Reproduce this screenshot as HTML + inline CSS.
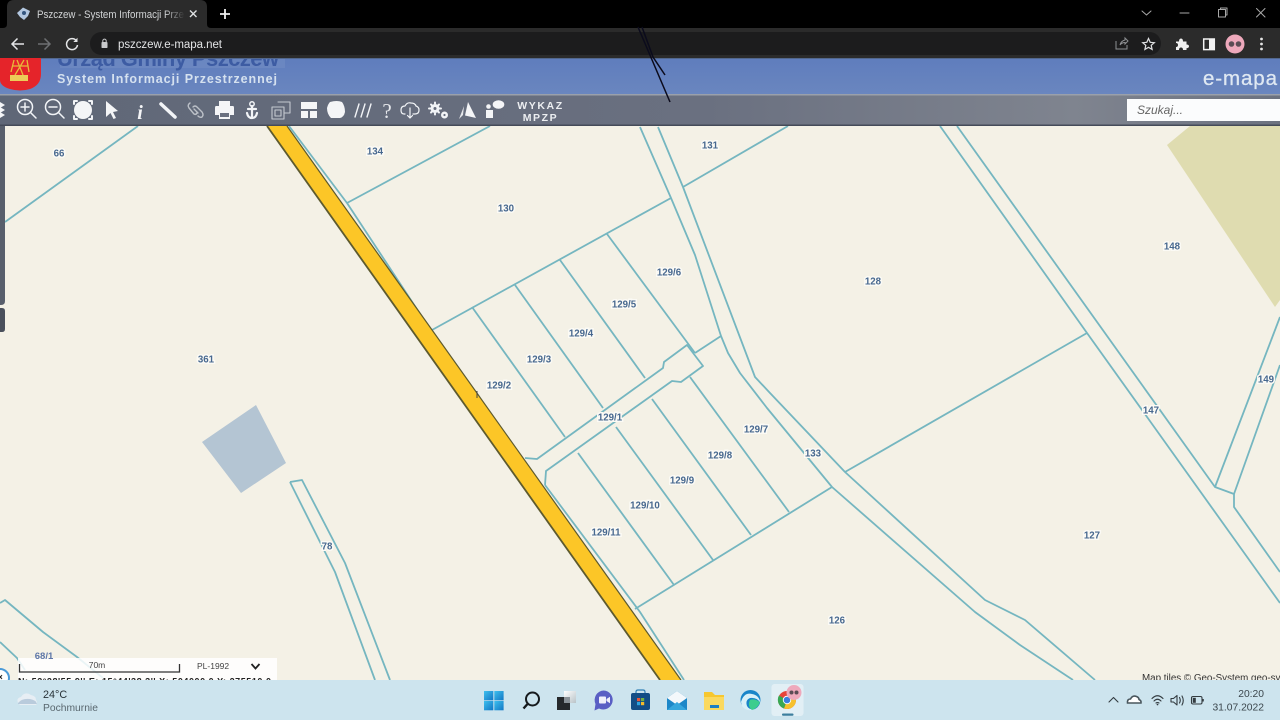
<!DOCTYPE html>
<html lang="pl"><head><meta charset="utf-8"><title>Pszczew - System Informacji Przestrzennej</title>
<style>
html,body{margin:0;padding:0;width:1280px;height:720px;overflow:hidden;background:#000}
svg{display:block;font-family:"Liberation Sans",sans-serif;filter:blur(.35px)}
.l{fill:none;stroke:#75b6c0;stroke-width:1.8;stroke-linejoin:round}
.t text{font-size:9.7px;font-weight:bold;fill:#47688f;text-anchor:middle;paint-order:stroke;stroke:#fbfaf5;stroke-width:3px}
.ic{fill:none;stroke:#f2f4f7;stroke-width:1.5;stroke-linecap:round;stroke-linejoin:round}
.f{fill:#f4f5f7;stroke:none}
.w{fill:none;stroke:#a8a8a8;stroke-width:1;stroke-linecap:round;stroke-linejoin:round}
.d{fill:none;stroke:#333b40;stroke-width:1.1;stroke-linecap:round;stroke-linejoin:round}
</style></head><body>
<svg width="1280" height="720" viewBox="0 0 1280 720" xmlns="http://www.w3.org/2000/svg">
<defs>
<linearGradient id="ban" x1="0" x2="0" y1="0" y2="1"><stop offset="0" stop-color="#5f7dbd"/><stop offset="1" stop-color="#6a86bf"/></linearGradient>
<linearGradient id="tbh" x1="0" x2="1" y1="0" y2="0"><stop offset="0" stop-color="#5f6777"/><stop offset=".55" stop-color="#6a7080"/><stop offset=".84" stop-color="#7f848f"/><stop offset="1" stop-color="#6c7280"/></linearGradient>
<linearGradient id="fade" x1="0" x2="1" y1="0" y2="0"><stop offset="0" stop-color="#2b2b2b" stop-opacity="0"/><stop offset="1" stop-color="#2b2b2b"/></linearGradient>
<linearGradient id="blue" x1="0" x2="1" y1="0" y2="1"><stop offset="0" stop-color="#3ec0ee"/><stop offset="1" stop-color="#1276c4"/></linearGradient>
<linearGradient id="tv" x1="0" x2="1" y1="0" y2="1"><stop offset="0" stop-color="#ffffff"/><stop offset="1" stop-color="#b9c3c8"/></linearGradient>
</defs>

<!-- map -->
<rect x="0" y="126" width="1280" height="554" fill="#f4f1e6"/>
<polygon points="1167,145 1190,126 1280,126 1280,300 1275,307" fill="#dfdcb0"/>
<polygon points="202,442 256,405 286,463 241,493" fill="#b4c5d3"/>

<g class="l">
<path d="M5,222 L138,126"/>
<path d="M289,126 L347,203 L430,329 L480,398"/>
<path d="M347,203 L490,126"/>
<path d="M432,330 L671,198"/>
<path d="M640,127 L671,198 L695,255 L721,336 L728,353 L740,373 L767,408 L832,487 L975,612 L1020,645 L1073,680"/>
<path d="M658,127 L683,187 L755,377 L770,393 L845,472 L985,600 L1025,620 L1095,680"/>
<path d="M683,187 L788,126"/>
<path d="M472,307 L565,437"/>
<path d="M515,285 L603,408"/>
<path d="M560,260 L645,378"/>
<path d="M607,234 L695,353"/>
<path d="M525,458 L537,459 L663,368 L664,362 L687,345 L703,366 L681,382 L672,381 L546,471 L545,485"/>
<path d="M695,353 L721,336"/>
<path d="M578,453 L674,585"/>
<path d="M616,427 L713,560"/>
<path d="M652,399 L751,535"/>
<path d="M690,377 L789,512"/>
<path d="M635,609 L832,487"/>
<path d="M845,472 L1087,333"/>
<path d="M940,126 L1087,333 L1280,603"/>
<path d="M957,126 L1215,487 L1234,494 L1234,507 L1280,572"/>
<path d="M1215,487 L1280,317"/>
<path d="M1234,494 L1280,365"/>
<path d="M290,482 L302,480 L345,563 L390,680"/>
<path d="M290,482 L335,572 L375,680"/>
<path d="M0,603 L5,600 L43,632 L77,657 L103,678"/>
<path d="M0,642 L17,658 L25,670"/>
<path d="M545,485 L640,612 L684,680"/>
</g>

<polygon points="267,126 287,126 681,680 660,680" fill="#fcc627"/>
<path d="M267,126 L660,680" stroke="#5d5a2e" stroke-width="1.8" fill="none"/>
<path d="M287,126 L681,680" stroke="#5d5a2e" stroke-width="1.2" fill="none"/>
<path d="M477,391 L477,398" stroke="#444" stroke-width="1"/>

<!-- scale -->
<rect x="18" y="658" width="259" height="22" fill="#fff" opacity=".85"/>
<path d="M19.500,664 V672 H179.500 V664" fill="none" stroke="#333" stroke-width="1.300"/>
<text x="97" y="668" font-size="8.500" fill="#444" text-anchor="middle">70m</text>
<text x="197" y="669" font-size="8.500" fill="#444">PL-1992</text>
<path d="M251.500,664 L255.500,668.500 L259.500,664" fill="none" stroke="#222" stroke-width="1.800"/>
<text x="18" y="684.500" font-size="9" font-weight="bold" fill="#222" textLength="253">N: 52°28'55.9'' E: 15°44'38.3'' X: 504000.0 Y: 275510.0</text>
<circle cx="0" cy="678" r="9" fill="#fff" stroke="#4a9ad8" stroke-width="2"/>
<path d="M-1,675 L2,679 M2,675 L-1,679" stroke="#222" stroke-width="1"/>
<text x="1142" y="681" font-size="9.800" fill="#333">Map tiles © Geo-System geo-sy</text>

<g class="t">
<text x="59" y="156.500">66</text><text x="375" y="154.500">134</text><text x="710" y="148.500">131</text>
<text x="506" y="211.500">130</text><text x="1172" y="249.500">148</text><text x="873" y="284.500">128</text>
<text x="669" y="275.500">129/6</text><text x="624" y="307.500">129/5</text><text x="581" y="336.500">129/4</text>
<text x="539" y="362.500">129/3</text><text x="499" y="388.500">129/2</text><text x="206" y="362.500">361</text>
<text x="610" y="420.500">129/1</text><text x="756" y="432.500">129/7</text><text x="720" y="458.500">129/8</text>
<text x="813" y="456.500">133</text><text x="682" y="483.500">129/9</text><text x="645" y="508.500">129/10</text>
<text x="606" y="535.500">129/11</text><text x="1151" y="413.500">147</text><text x="1266" y="382.500">149</text>
<text x="327" y="549.500">78</text><text x="1092" y="538.500">127</text><text x="837" y="623.500">126</text>
</g>
<text x="44" y="659" font-size="9.500" font-weight="bold" fill="#5d76a8" text-anchor="middle">68/1</text>

<!-- left panels -->
<path d="M0,126 H5 V301 Q5,305 1,305 H0Z" fill="#585f6c"/>
<path d="M0,308 H2 Q5,308 5,311 V329 Q5,332 2,332 H0Z" fill="#4a505c"/>

<!-- banner -->
<rect x="0" y="58" width="1280" height="36" fill="url(#ban)"/>
<rect x="60" y="58" width="225" height="10" fill="#7f97c8" opacity=".35"/>
<text x="57" y="66" font-size="22" font-weight="bold" fill="#3d5ca3" textLength="222">Urząd Gminy Pszczew</text>
<rect x="0" y="58" width="1280" height="1" fill="#52688f"/>
<text x="57" y="83" font-size="12.500" font-weight="bold" fill="#d5e1ef" textLength="220">System Informacji Przestrzennej</text>
<path d="M0,58 H41 V74 Q41,85 30,89 Q20,92 10,89 Q0,86 0,80Z" fill="#e5242a"/>
<path d="M11,72 L14,60 M27,60 L29,72 M17,60 L23,75 M24,60 L15,75 M13,66 H28" stroke="#e8b93a" stroke-width="1.300" fill="none"/>
<rect x="10" y="75" width="18" height="6" fill="#eccb58"/>
<text x="1277" y="85" font-size="20.500" fill="#dfe8f2" text-anchor="end" stroke="#dfe8f2" stroke-width=".3" textLength="74">e-mapa</text>

<!-- map toolbar -->
<rect x="0" y="94" width="1280" height="32" fill="url(#tbh)"/>
<rect x="0" y="94" width="1280" height="1.500" fill="#9aa0ab"/>
<rect x="0" y="124.500" width="1280" height="1.500" fill="#454b59"/>
<rect x="1127" y="99" width="153" height="22" fill="#fbfcfd"/>
<text x="1137" y="114" font-size="12" font-style="italic" fill="#666">Szukaj...</text>

<g class="ic">
<path class="f" d="M0,102 L5,105 L0,108Z M0,107 L5,110 L0,113Z M0,112 L5,115 L0,118Z"/>
<circle cx="25" cy="107" r="7.500"/><path d="M30.500,112.500 L36,118 M21,107 H29 M25,103 V111"/>
<circle cx="53" cy="107" r="7.500"/><path d="M58.500,112.500 L64,118 M49,107 H57"/>
<circle class="f" cx="83" cy="110" r="9"/><path d="M74,104 V101 H77 M89,101 H92 V104 M74,116 V119 H77 M89,119 H92 V116" stroke-width="2"/>
<path class="f" stroke="#30343c" d="M106,101 L118,111 L113,112 L116,118 L113.500,119 L110.500,113 L106,117Z"/>
<text x="140" y="119" font-family="Liberation Serif" font-style="italic" font-weight="bold" font-size="20" fill="#f4f5f7" stroke="none" text-anchor="middle">i</text>
<path d="M161,104 L175,117" stroke-width="3.500"/>
<path d="M194,109 L198,113 M190,103 Q187,105 189,108 L194,114 Q196,115 197,113 M193,107 Q195,105 197,107 L202,112 Q204,115 202,117 Q200,118 198,116" stroke="#bcc1c8" stroke-width="1.400"/>
<path class="f" d="M219,101 H230 V106 H219Z M216,106 H233 Q234,106 234,108 V115 H230 V119 H219 V115 H215 V108 Q215,106 216,106Z"/>
<rect x="220" y="113" width="9" height="4" fill="#6a7080" stroke="none"/>
<circle cx="252" cy="104" r="2.200" stroke-width="1.500"/><path d="M252,106 V118 M248,109 H256 M247,113 Q248,118 252,118 Q256,118 257,113" stroke-width="2.200"/>
<path d="M278,102 H290 V113 H284 M272,107 H284 V119 H272Z M275,110 H281 V116 H275Z" stroke="#c5c9d0" stroke-width="1.100"/>
<path class="f" d="M301,102 H317 V109 H301Z M301,111 H308 V118 H301Z M310,111 H317 V118 H310Z"/>
<path class="f" d="M330,102 Q337,100 342,102 Q345,106 345,112 Q344,117 340,118 L331,118 Q327,114 327,108 Q328,104 330,102Z"/>
<path d="M355,117 L359,104 M361,117 L365,104 M367,117 L371,104" stroke-width="1.400"/>
<text x="387" y="118" font-size="21" fill="#e6e8ec" stroke="none" text-anchor="middle" font-family="Liberation Serif">?</text>
<path d="M405,114 H404 Q401,114 401,110 Q401,106 405,106 Q407,102 411,103 Q415,103 416,106 Q419,107 419,110 Q419,114 415,114 H413 M410,108 V118 M407.500,115.500 L410,118 L412.500,115.500" stroke-width="1.200"/>
<circle cx="435" cy="108.500" r="3" stroke-width="3"/><path d="M435,102.500 V103.500 M435,113.500 V114.500 M429,108.500 H430 M440,108.500 H441 M431,104.500 L432,105.500 M438,111.500 L439,112.500 M431,112.500 L432,111.500 M438,105.500 L439,104.500" stroke-width="2"/>
<circle cx="444.500" cy="115" r="2.300" stroke-width="2.400"/>
<path class="f" d="M468,102 L476,118 L465,115.500Z"/><path class="f" d="M464,106 L463,115 L459,119Z" opacity=".9"/>
<path class="f" d="M486,110 H493 V118 H486Z"/><circle class="f" cx="488.500" cy="106.500" r="2.300"/>
<ellipse class="f" cx="498.500" cy="104.500" rx="5.800" ry="4.300"/>
</g>
<g font-weight="bold" fill="#eceef1" text-anchor="middle" font-size="10.500" letter-spacing="1.600">
<text x="540.500" y="109">WYKAZ</text><text x="540.500" y="121">MPZP</text>
</g>

<!-- chrome -->
<rect x="0" y="0" width="1280" height="28" fill="#000"/>
<rect x="0" y="28" width="1280" height="30" fill="#2b2b2b"/>
<path d="M0,28 H3 Q7,28 7,24 V7 Q7,0 14,0 H200 Q207,0 207,7 V24 Q207,28 211,28 Z" fill="#2b2b2b"/>
<rect x="90" y="32" width="1071" height="23" rx="11.500" fill="#1c1c1d"/>
<text x="37" y="18" font-size="10.800" fill="#d2d4d6" textLength="147" lengthAdjust="spacingAndGlyphs">Pszczew - System Informacji Prze</text>
<rect x="165" y="6" width="20" height="16" fill="url(#fade)"/>
<path d="M17,13 L23,7.500 L30,11 L28,16 L24,20 L20,17Z" fill="#b3c7e0"/><circle cx="24" cy="13" r="2" fill="#33557f"/>
<path d="M190,10.500 L196.500,17 M196.500,10.500 L190,17" stroke="#dfe1e3" stroke-width="1.400"/>
<path d="M225,9 V19 M220,14 H230" stroke="#f0f0f0" stroke-width="1.800"/>
<path d="M1142,11 L1146.500,15 L1151,11" class="w"/>
<path d="M1180,13 H1189" class="w"/>
<path d="M1218.500,9.500 H1225.500 V17 H1218.500Z M1220.500,9.500 V8 H1227 V15 H1225.500" class="w"/>
<path d="M1256.500,8.500 L1265,17 M1265,8.500 L1256.500,17" class="w"/>

<path d="M12,44 H24 M17.500,38.500 L12,44 L17.500,49.500" stroke="#e4e5e7" stroke-width="1.500" fill="none"/>
<path d="M38,44 H50 M44.500,38.500 L50,44 L44.500,49.500" stroke="#6e7073" stroke-width="1.500" fill="none"/>
<path d="M76.200,40.500 A5.500,5.500 0 1 0 77.500,45" stroke="#e4e5e7" stroke-width="1.500" fill="none"/><path d="M77.500,37.800 V42 H73.300Z" fill="#e4e5e7"/>
<rect x="101.500" y="42" width="6" height="6" rx=".8" fill="#c8c9cb"/><path d="M102.800,42 V40.800 A1.700,1.700 0 0 1 106.200,40.800 V42" stroke="#c8c9cb" fill="none"/>
<text x="118" y="48.200" font-size="11.500" fill="#e3e4e6" textLength="104">pszczew.e-mapa.net</text>
<path d="M1116,41 V49 H1127 V45 M1120,45 Q1121,41 1125,40 V38 L1128,41 L1125,44 V42.500 Q1122,42.500 1120,45Z" stroke="#8d8f92" fill="none"/>
<path d="M1148.500,38.500 L1150.200,42.300 L1154.300,42.700 L1151.200,45.300 L1152.100,49.400 L1148.500,47.300 L1144.900,49.400 L1145.800,45.300 L1142.700,42.700 L1146.800,42.300Z" stroke="#dfe0e2" stroke-width="1.200" fill="none"/>
<path d="M1176,41.500 H1179 Q1179,38.500 1181,38.500 Q1183,38.500 1183,41.500 H1186.500 V44.500 Q1189,44.500 1189,46.300 Q1189,48.200 1186.500,48.200 V50 H1183 Q1183,47.500 1181,47.500 Q1179,47.500 1179,50 H1176 V47 Q1178,47 1178,45 Q1178,43 1176,43Z" fill="#f0f0f0"/>
<rect x="1203.700" y="39" width="10.600" height="10.600" fill="none" stroke="#f2f2f2" stroke-width="1.500"/><rect x="1209" y="39" width="5.500" height="10.600" fill="#f2f2f2"/>
<circle cx="1235" cy="44" r="9.500" fill="#eea9bc"/>
<circle cx="1231.500" cy="44" r="2.800" fill="#5b4c55"/><circle cx="1238.500" cy="44" r="2.800" fill="#5b4c55"/>
<circle cx="1261.500" cy="39" r="1.400" fill="#e4e4e4"/><circle cx="1261.500" cy="44" r="1.400" fill="#e4e4e4"/><circle cx="1261.500" cy="49" r="1.400" fill="#e4e4e4"/>

<!-- scratches -->
<path d="M638,27 L670,102 M642,27 L653,57 L665,75" stroke="#0b0b1c" stroke-width="1.500" fill="none"/>

<!-- taskbar -->
<rect x="0" y="680" width="1280" height="40" fill="#cde4ee"/>
<path d="M18,703 Q16,698 21,697 Q25,691 31,695 Q36,696 36,700 Q38,703 36,705 H20Z" fill="#e7eef4"/>
<path d="M18,703 Q22,698 30,699 Q36,700 37,704 H18Z" fill="#b9cbdc"/>
<text x="43" y="698" font-size="10.800" fill="#283238">24°C</text>
<text x="43" y="711" font-size="10.300" fill="#59676f">Pochmurnie</text>

<rect x="484" y="691" width="9.300" height="9.300" fill="url(#blue)"/><rect x="494.300" y="691" width="9.300" height="9.300" fill="url(#blue)"/>
<rect x="484" y="701" width="9.300" height="9.300" fill="url(#blue)"/><rect x="494.300" y="701" width="9.300" height="9.300" fill="url(#blue)"/>
<circle cx="532.500" cy="699" r="6.500" fill="none" stroke="#161a1d" stroke-width="2"/><path d="M527.500,704 L523.500,708.500" stroke="#161a1d" stroke-width="2.400"/>
<rect x="564" y="691" width="12" height="12" fill="url(#tv)"/><rect x="557" y="697" width="13" height="13" fill="#26292c"/>
<path d="M564,697 H570 V703 H564Z" fill="#8a9298"/>
<path d="M603.500,690.500 A9.500,9.500 0 1 1 599,708.500 L594.500,710.500 L595.500,704 A9.500,9.500 0 0 1 603.500,690.500Z" fill="#5a5fc4"/>
<rect x="599" y="696.500" width="7" height="7" rx="1" fill="#f0f0fa"/><path d="M606.500,699 L610,696.800 V703.200 L606.500,701Z" fill="#f0f0fa"/>
<path d="M636,694 V692 Q636,690 638,690 H643 Q645,690 645,692 V694" stroke="#2f7fb5" fill="none" stroke-width="1.200"/>
<rect x="631" y="693" width="19" height="17" rx="2" fill="#124d86"/>
<rect x="637" y="698" width="3.200" height="3.200" fill="#e8553a"/><rect x="641" y="698" width="3.200" height="3.200" fill="#72b043"/><rect x="637" y="702" width="3.200" height="3.200" fill="#2ca3e0"/><rect x="641" y="702" width="3.200" height="3.200" fill="#f5bb2a"/>
<path d="M667,698 L677,691 L687,698 V710 H667Z" fill="#1c87c8"/>
<path d="M667,698 L677,705 L687,698 L677,691Z" fill="#f4f8fb"/><path d="M667,710 L677,702 L687,710Z" fill="#35a6dd"/>
<path d="M704,692 H712 L715,695 H724 V710 H704Z" fill="#f7c72f"/><path d="M704,697 H724 V710 H704Z" fill="#fbd95f"/><rect x="710" y="705" width="9" height="3" fill="#1f7fc4"/>
<circle cx="750.500" cy="700" r="10" fill="#1985c9"/>
<path d="M741,702 Q744,692 752,694 Q759,695 760.500,703 Q757,697 750,698 Q745,700 747,706 Q749,710 755,709.500 Q746,712 742,706Z" fill="#d8f0f8"/>
<path d="M750,700 Q754,698 760,702 Q758,708 752,710 Q747,706 750,700Z" fill="#3dcd8e"/>
<rect x="771.500" y="684" width="32" height="32" rx="3" fill="#e2eff5"/>
<circle cx="787" cy="700" r="9" fill="#e8443a"/>
<path d="M787,700 L795.500,697 A9,9 0 0 1 784,708.500Z" fill="#f6c12e"/>
<path d="M787,700 L784,708.500 A9,9 0 0 1 779,695.500Z" fill="#39a853"/>
<circle cx="787" cy="700" r="4.200" fill="#fff"/><circle cx="787" cy="700" r="3.300" fill="#3b7fe0"/>
<circle cx="794" cy="692.500" r="7.500" fill="#eea9bc"/><circle cx="791.500" cy="692.500" r="2" fill="#5b4c55"/><circle cx="796.500" cy="692.500" r="2" fill="#5b4c55"/>
<rect x="782" y="713.500" width="11.500" height="2.200" rx="1" fill="#3d7f9e"/>

<path class="d" d="M1109,702 L1113.500,697.500 L1118,702"/>
<path d="M1127.500,703 Q1127,699 1130.500,699 Q1132.500,695 1136.500,696.500 Q1139,697.500 1139,699.500 Q1141.500,700.500 1141,703Z" fill="#fff" stroke="#49565d" stroke-width="1.600"/>
<path class="d" d="M1152,698.500 Q1157.500,693 1163,698.500 M1154,701 Q1157.500,697.500 1161,701 M1156,703 Q1157.500,702 1159,703"/>
<circle cx="1157.500" cy="704.500" r=".9" fill="#333b40"/>
<path class="d" d="M1171,698.500 H1173.500 L1177,695.500 V705 L1173.500,702 H1171Z M1179.500,697.500 Q1181,700.500 1179.500,703 M1182,696 Q1184.500,700.500 1182,705"/>
<rect x="1191.500" y="696.500" width="10.500" height="7.500" rx="1.500" class="d"/><rect x="1192.800" y="697.800" width="3" height="5" fill="#333b40"/><rect x="1202.500" y="699" width="1.300" height="2.500" fill="#333b40"/>
<text x="1264" y="697" font-size="10.300" fill="#3b464c" text-anchor="end">20:20</text>
<text x="1264" y="710.500" font-size="10.300" fill="#3b464c" text-anchor="end">31.07.2022</text>
</svg>
</body></html>
